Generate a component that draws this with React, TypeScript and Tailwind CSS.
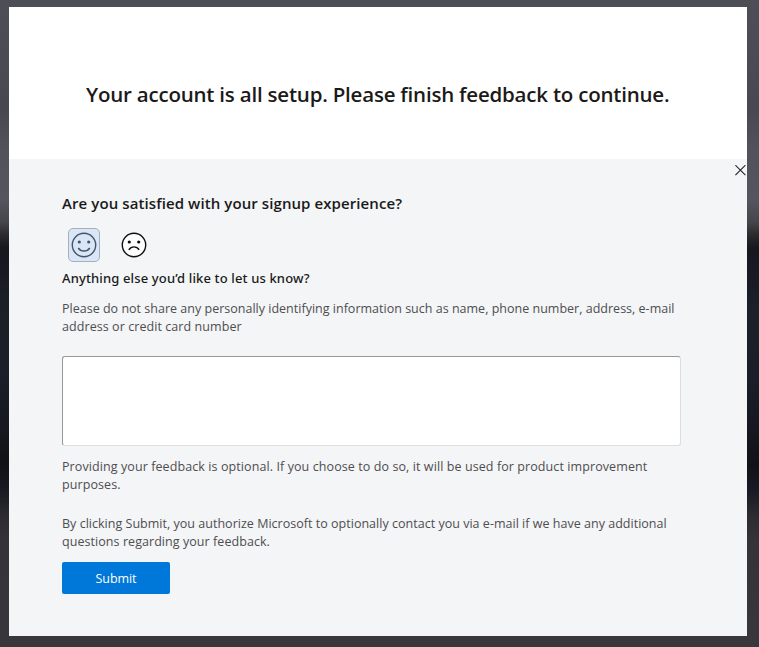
function Line({ text, className }: { text: string; className: string }) {
  return <span className={`block whitespace-nowrap ${className}`}>{text}</span>;
}

function Face({ happy }: { happy: boolean }) {
  return (
    <svg width="26" height="26" viewBox="0 0 26 26" fill="none" stroke="currentColor" strokeWidth="1.4">
      <circle cx="13" cy="13" r="11.7" fill={happy ? "none" : "#fff"} />
      <circle cx="8.3" cy="10" r="1.6" fill="currentColor" stroke="none" />
      <circle cx="17.7" cy="10" r="1.6" fill="currentColor" stroke="none" />
      {happy ? <path d="M7.2 16C9.8 20 16.2 20 18.8 16" /> : <path d="M7.8 17.9C10.4 13.9 15.6 13.9 18.2 17.9" />}
    </svg>
  );
}

export default function App() {
  return (
    <div className="flex h-[647px] w-[759px] bg-[linear-gradient(180deg,#4e4e57_0px,#4b4b54_60px,#484850_110px,#52525b_150px,#55555e_200px,#45454b_222px,#29282b_236px,#17171e_248px,#181a23_270px,#1b2029_310px,#1a1e28_380px,#151820_430px,#111215_465px,#191b25_492px,#2c2b2f_515px,#353338_540px,#39363c_647px)] px-[9px] pt-[7px] font-['Open_Sans','Noto_Sans',sans-serif] text-[#1b1a19]">
      <main className="flex h-[629px] w-[738px] flex-col bg-white">
        <header className="h-[152px] pl-[77px] pt-[72px]">
          <h1 className="whitespace-nowrap text-[20.5px] font-semibold leading-[30px] tracking-[-0.21px]">
            Your account is all setup. Please finish feedback to continue.
          </h1>
        </header>
        <section className="relative flex-1 bg-[#f3f5f7] pl-[53px] pt-[34px]">
          <button aria-label="Close" className="absolute left-[726px] top-[6px]">
            <svg width="11" height="11" viewBox="0 0 11 11" stroke="#222" strokeWidth="1.1">
              <path d="M.4.2l10 10M10.4.2L.4 10.2" />
            </svg>
          </button>
          <h2 className="h-[35px] whitespace-nowrap text-[15px] font-semibold leading-5 tracking-[0.09px]">
            Are you satisfied with your signup experience?
          </h2>
          <div className="flex h-[34px] items-center pl-[6px]">
            <button aria-label="Satisfied" className="flex h-[34px] w-[32px] items-center justify-center rounded-[5px] border border-[#a5b0be] bg-[#d9e6f8] text-[#475467]">
              <Face happy />
            </button>
            <button aria-label="Dissatisfied" className="ml-[21px] text-[#111]">
              <Face happy={false} />
            </button>
          </div>
          <label htmlFor="comment" className="mt-[7px] block whitespace-nowrap font-['Noto_Sans',sans-serif] text-[13px] font-medium leading-[18px] tracking-[0.14px]">
            Anything else you’d like to let us know?
          </label>
          <p className="mt-[13px] text-[12.5px] leading-[18px] text-[#4f4d50]">
            <Line className="tracking-[0.01px]" text="Please do not share any personally identifying information such as name, phone number, address, e-mail" />
            <Line className="tracking-[0.07px]" text="address or credit card number" />
          </p>
          <textarea id="comment" className="mt-[20px] block h-[90px] w-[619px] resize-none rounded-[3px] border border-b-[#dedede] border-l-[#999] border-r-[#dedede] border-t-[#999] bg-white" />
          <p className="mt-[12px] text-[12.5px] leading-[18px] text-[#4f4d50]">
            <Line className="tracking-[0.09px]" text="Providing your feedback is optional. If you choose to do so, it will be used for product improvement" />
            <Line className="tracking-[0.09px]" text="purposes." />
          </p>
          <p className="mt-[21px] text-[12.5px] leading-[18px] text-[#4f4d50]">
            <Line className="tracking-[0.02px]" text="By clicking Submit, you authorize Microsoft to optionally contact you via e-mail if we have any additional" />
            <Line className="tracking-[0.06px]" text="questions regarding your feedback." />
          </p>
          <button className="mt-[11px] h-[32px] w-[108px] rounded-[2px] bg-[#0078d9] pt-[2px] text-[12.5px] leading-none tracking-[-0.1px] text-white">Submit</button>
        </section>
      </main>
    </div>
  );
}
